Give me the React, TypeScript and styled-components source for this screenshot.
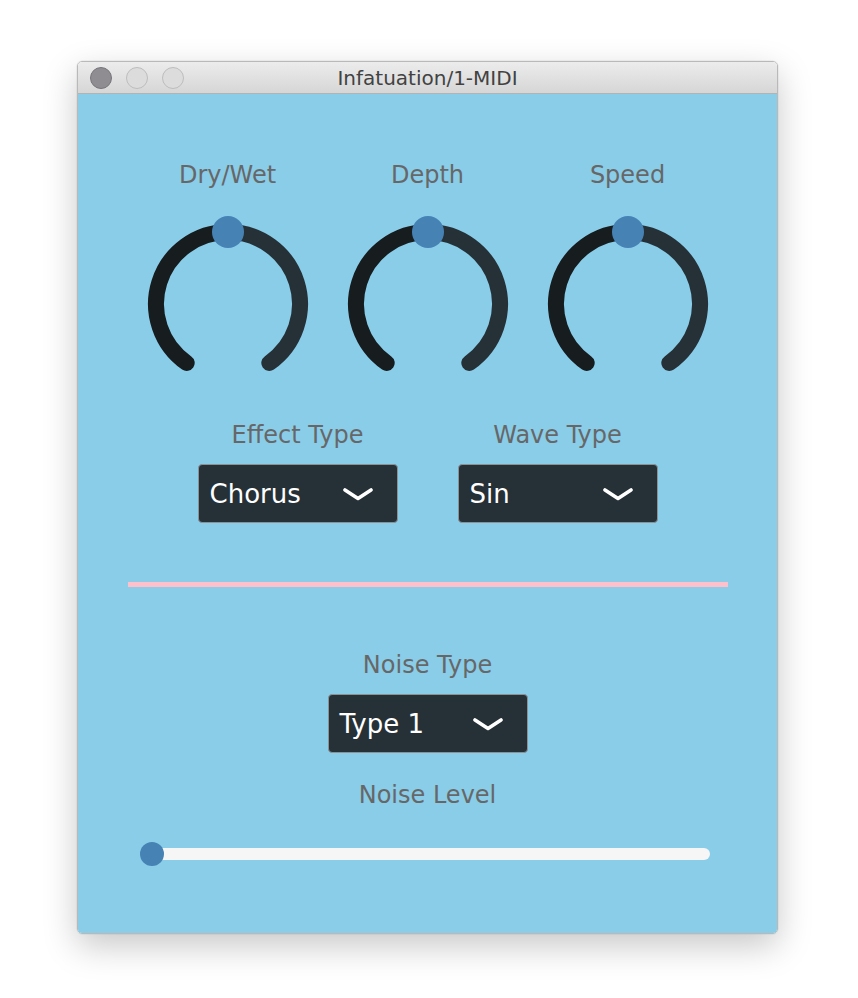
import React from 'react';
import styled, { createGlobalStyle } from 'styled-components';

const GlobalStyle = createGlobalStyle`
  html, body {
    margin: 0;
    padding: 0;
    background: #ffffff;
  }
  body {
    font-family: "DejaVu Sans", "Noto Sans", sans-serif;
  }
`;

const Page = styled.div`
  width: 858px;
  height: 998px;
  padding: 61px 0 0 77px;
  box-sizing: border-box;
`;

const Window = styled.div`
  width: 701px;
  height: 873px;
  border-radius: 5px;
  border: 1px solid #b9b9b9;
  box-sizing: border-box;
  overflow: hidden;
  display: flex;
  flex-direction: column;
  box-shadow: 0 12px 34px rgba(0, 0, 0, 0.22), 0 0 0 0.5px rgba(0, 0, 0, 0.08);
`;

const TitleBar = styled.div`
  height: 31px;
  flex: none;
  display: flex;
  align-items: center;
  position: relative;
  background: linear-gradient(#ececec, #d6d6d6);
  border-bottom: 1px solid #b3b3b3;
  padding-left: 12px;
  gap: 14px;
`;

const Light = styled.div<{ $active?: boolean }>`
  width: 22px;
  height: 22px;
  border-radius: 50%;
  box-sizing: border-box;
  background: ${(p) => (p.$active ? '#8f8d92' : '#dcdcdc')};
  border: 1px solid ${(p) => (p.$active ? '#77757a' : '#bdbdbd')};
`;

const Title = styled.div`
  position: absolute;
  left: 0;
  right: 0;
  top: 0;
  bottom: 0;
  display: flex;
  align-items: center;
  justify-content: center;
  font-size: 20px;
  color: #424242;
  pointer-events: none;
`;

const Content = styled.div`
  flex: 1;
  background: #89cde9;
  display: flex;
  flex-direction: column;
  align-items: center;
  padding-top: 67px;
`;

const KnobRow = styled.div`
  display: grid;
  grid-template-columns: repeat(3, 200px);
`;

const Column = styled.div`
  display: flex;
  flex-direction: column;
  align-items: center;
`;

const Label = styled.div`
  font-size: 24px;
  line-height: 28px;
  color: #676767;
`;

const KnobSvg = styled.svg`
  margin-top: 27px;
  display: block;
`;

const SelectRow = styled.div`
  display: grid;
  grid-template-columns: repeat(2, 200px);
  column-gap: 60px;
  margin-top: 29px;
`;

const Select = styled.div`
  width: 200px;
  height: 59px;
  margin-top: 15px;
  box-sizing: border-box;
  border: 1.5px solid #8b9296;
  border-radius: 4px;
  background: #263137;
  display: flex;
  align-items: center;
  justify-content: space-between;
  padding: 0 24px 0 11px;
  color: #ffffff;
  font-size: 26px;
`;

const Divider = styled.div`
  width: 600px;
  height: 5px;
  background: #ffc0cb;
  margin-top: 59px;
`;

const NoiseSection = styled(Column)`
  margin-top: 64px;
`;

const NoiseLevelLabel = styled(Label)`
  margin-top: 28px;
`;

const SliderWrap = styled.div`
  position: relative;
  align-self: flex-start;
  width: 570px;
  height: 24px;
  margin-top: 33px;
  margin-left: 62px;
  display: flex;
  align-items: center;
`;

const Track = styled.div`
  margin-left: 12px;
  flex: 1;
  height: 12px;
  border-radius: 6px;
  background: #f6f6f6;
`;

const Thumb = styled.div`
  position: absolute;
  left: 0;
  top: 0;
  width: 24px;
  height: 24px;
  border-radius: 50%;
  background: #4682b4;
`;

const Knob = () => {
  const c = 88;
  const r = 72;
  const a = (145 * Math.PI) / 180;
  const ex = r * Math.sin(a);
  const ey = -r * Math.cos(a);
  const lx = c - ex;
  const rx = c + ex;
  const by = c + ey;
  return (
    <KnobSvg width="176" height="176" viewBox="0 0 176 176">
      <path
        d={`M ${lx} ${by} A ${r} ${r} 0 0 1 ${c} ${c - r}`}
        fill="none"
        stroke="#171c1f"
        strokeWidth="16"
        strokeLinecap="round"
      />
      <path
        d={`M ${c} ${c - r} A ${r} ${r} 0 0 1 ${rx} ${by}`}
        fill="none"
        stroke="#263137"
        strokeWidth="16"
        strokeLinecap="round"
      />
      <circle cx={c} cy={c - r} r="16" fill="#4682b4" />
    </KnobSvg>
  );
};

const Chevron = () => (
  <svg width="30" height="14" viewBox="0 0 30 14">
    <path
      d="M2 3 L15 11.5 L28 3"
      fill="none"
      stroke="#ffffff"
      strokeWidth="3.6"
      strokeLinecap="round"
      strokeLinejoin="round"
    />
  </svg>
);

const Dropdown = ({ value }: { value: string }) => (
  <Select>
    <span>{value}</span>
    <Chevron />
  </Select>
);

const knobs = ['Dry/Wet', 'Depth', 'Speed'];

export default function App() {
  return (
    <>
      <GlobalStyle />
      <Page>
        <Window>
          <TitleBar>
            <Light $active />
            <Light />
            <Light />
            <Title>Infatuation/1-MIDI</Title>
          </TitleBar>
          <Content>
            <KnobRow>
              {knobs.map((k) => (
                <Column key={k}>
                  <Label>{k}</Label>
                  <Knob />
                </Column>
              ))}
            </KnobRow>
            <SelectRow>
              <Column>
                <Label>Effect Type</Label>
                <Dropdown value="Chorus" />
              </Column>
              <Column>
                <Label>Wave Type</Label>
                <Dropdown value="Sin" />
              </Column>
            </SelectRow>
            <Divider />
            <NoiseSection>
              <Label>Noise Type</Label>
              <Dropdown value="Type 1" />
              <NoiseLevelLabel>Noise Level</NoiseLevelLabel>
            </NoiseSection>
            <SliderWrap>
              <Track />
              <Thumb />
            </SliderWrap>
          </Content>
        </Window>
      </Page>
    </>
  );
}
